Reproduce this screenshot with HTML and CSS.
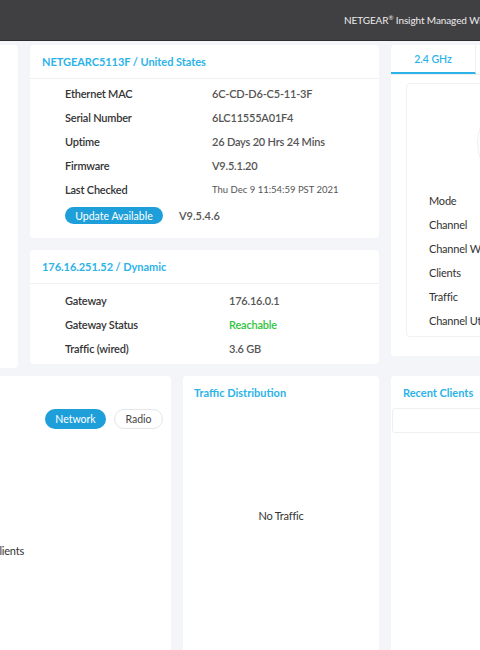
FILE: index.html
```html
<!DOCTYPE html>
<html lang="en">
<head>
<meta charset="utf-8">
<title>NETGEAR Insight</title>
<link rel="stylesheet" href="styles.css">
</head>
<body>
<header class="topbar">
  <span class="brand">NETGEAR<sup>®</sup> Insight Managed Wireless Access Point</span>
</header>
<main class="page">
  <section class="row row-top">
    <div class="card card-stub"></div>
    <div class="col-mid">
      <div class="card info">
        <h2 class="card-title">NETGEARC5113F / United States</h2>
        <div class="card-body">
          <div class="kv"><span class="k">Ethernet MAC</span><span class="v">6C-CD-D6-C5-11-3F</span></div>
          <div class="kv"><span class="k">Serial Number</span><span class="v">6LC11555A01F4</span></div>
          <div class="kv"><span class="k">Uptime</span><span class="v">26 Days 20 Hrs 24 Mins</span></div>
          <div class="kv"><span class="k">Firmware</span><span class="v">V9.5.1.20</span></div>
          <div class="kv"><span class="k">Last Checked</span><span class="v small">Thu Dec 9 11:54:59 PST 2021</span></div>
          <div class="update"><button class="pill pill-blue pill-update">Update Available</button><span class="newver">V9.5.4.6</span></div>
        </div>
      </div>
      <div class="card info info-net">
        <h2 class="card-title">176.16.251.52 / Dynamic</h2>
        <div class="card-body body-net">
          <div class="kv kv-wide"><span class="k">Gateway</span><span class="v">176.16.0.1</span></div>
          <div class="kv kv-wide"><span class="k">Gateway Status</span><span class="v ok">Reachable</span></div>
          <div class="kv kv-wide"><span class="k">Traffic (wired)</span><span class="v">3.6 GB</span></div>
        </div>
      </div>
    </div>
    <div class="card radio">
      <div class="tabs">
        <div class="tab active">2.4 GHz</div>
        <div class="tab">5 GHz</div>
      </div>
      <div class="radio-inner">
        <div class="gauge"></div>
        <div class="rlist">
          <div class="rk">Mode</div>
          <div class="rk">Channel</div>
          <div class="rk">Channel Width</div>
          <div class="rk">Clients</div>
          <div class="rk">Traffic</div>
          <div class="rk">Channel Utilization</div>
        </div>
      </div>
    </div>
  </section>
  <section class="row row-bottom">
    <div class="card clients">
      <div class="toggle">
        <button class="pill pill-blue">Network</button>
        <button class="pill pill-white">Radio</button>
      </div>
      <div class="legend">Clients</div>
    </div>
    <div class="card traffic">
      <h3 class="sub-title">Traffic Distribution</h3>
      <div class="empty">No Traffic</div>
    </div>
    <div class="card recent">
      <h3 class="sub-title">Recent Clients</h3>
      <div class="recent-head"></div>
    </div>
  </section>
</main>
</body>
</html>
```
FILE: styles.css
```css
* { box-sizing: border-box; }
html, body { margin: 0; padding: 0; }
body {
  width: 480px;
  height: 650px;
  overflow: hidden;
  background: #f4f5f8;
  font-family: "Lato", "Liberation Sans", sans-serif;
  color: #333;
}
.topbar {
  height: 41px;
  background: #403f41;
  border-bottom: 1px solid #2d2d2e;
  display: flex;
  align-items: center;
  padding-left: 344px;
  white-space: nowrap;
  overflow: hidden;
}
.brand {
  color: #ececec;
  font-size: 10px;
  letter-spacing: -0.1px;
}
.brand sup { font-size: 6px; }
.page {
  margin-left: -200px;
  width: 1100px;
  padding-top: 4px;
}
.row { display: flex; align-items: flex-start; }
.card {
  background: #fff;
  border-radius: 4px;
  flex: none;
}
.card-stub { width: 218px; height: 323px; margin-right: 12px; }
.col-mid { width: 349px; display: flex; flex-direction: column; gap: 12px; margin-right: 12px; }
.info { height: 193px; }
.info-net { height: 114px; }
.card-title {
  margin: 0;
  height: 34px;
  padding: 0 12px;
  display: flex;
  align-items: center;
  font-size: 11px;
  font-weight: 700;
  letter-spacing: -0.05px;
  color: #2cb3e8;
  border-bottom: 1px solid #eef0f2;
}
.card-body { padding: 2px 0 0 35px; }
.body-net { padding-top: 4px; }
.kv {
  display: flex;
  height: 24px;
  align-items: center;
  font-size: 11px;
  letter-spacing: -0.2px;
}
.k { width: 147px; font-weight: 600; color: #333; }
.kv-wide .k { width: 164px; }
.v { color: #555; font-weight: 600; }
.v.small { font-size: 9.5px; font-weight: 400; color: #555; letter-spacing: 0; }
.v.ok { color: #2fc440; }
.update { display: flex; align-items: center; margin-top: 6px; }
.pill {
  border-radius: 10px;
  font-family: inherit;
  font-size: 10.5px;
  padding: 0;
  cursor: pointer;
}
.pill-blue { background: #1f9fda; color: #fff; border: none; }
.pill-white { background: #fff; color: #444; border: 1px solid #e4e6ea; }
.pill-update { width: 98px; height: 17px; }
.newver { margin-left: 16px; font-size: 11px; font-weight: 600; color: #555; }
.radio { width: 300px; height: 311px; }
.tabs { display: flex; height: 30px; border-bottom: 1px solid #eef0f2; }
.tab {
  width: 85px;
  display: flex;
  align-items: center;
  justify-content: center;
  font-size: 10.5px;
  font-weight: 600;
  color: #555;
  border-right: 1px solid #eef0f2;
}
.tab.active { color: #2cb3e8; border-bottom: 2px solid #2cb3e8; }
.radio-inner {
  margin: 8px 0 0 15px;
  height: 254px;
  border: 1px solid #f0f1f3;
  border-radius: 4px;
  position: relative;
  overflow: hidden;
  padding: 104px 0 0 22px;
}
.gauge {
  position: absolute;
  left: 70px;
  top: 14px;
  width: 90px;
  height: 90px;
  border-radius: 50%;
  border: 1px solid #eee;
}
.rk { height: 24px; display: flex; align-items: center; font-size: 11px; letter-spacing: -0.2px; color: #333; }
.row-bottom { margin-top: 8px; }
.clients { width: 371px; height: 300px; margin-right: 12px; }
.toggle { display: flex; justify-content: flex-end; gap: 8px; padding: 33px 8px 0 0; }
.toggle .pill { height: 20px; }
.toggle .pill-blue { width: 61px; }
.toggle .pill-white { width: 49px; }
.legend { width: 224px; text-align: right; padding-top: 115px; font-size: 11px; letter-spacing: -0.2px; color: #333; }
.traffic { width: 196px; height: 300px; margin-right: 12px; display: flex; flex-direction: column; }
.sub-title {
  margin: 0;
  padding: 10px 0 0 11px;
  font-size: 11px;
  font-weight: 700;
  color: #2cb3e8;
}
.empty { text-align: center; padding-top: 110px; font-size: 11px; letter-spacing: -0.2px; color: #333; }
.recent { width: 300px; height: 300px; }
.recent .sub-title { padding-left: 12px; }
.recent-head {
  margin: 9px 0 0 1px;
  height: 25px;
  border: 1px solid #eeeff1;
  border-radius: 3px;
}
```
